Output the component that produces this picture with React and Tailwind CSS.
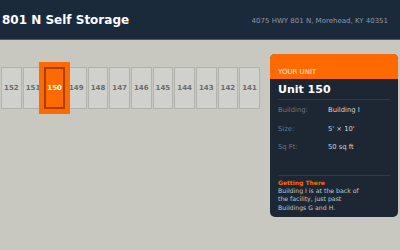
import React from 'react';

const units = ['152', '151', '150', '149', '148', '147', '146', '145', '144', '143', '142', '141'];

const details = [
  { label: 'Building:', value: 'Building I' },
  { label: 'Size:', value: "5' × 10'" },
  { label: 'Sq Ft:', value: '50 sq ft' },
];

const App = () => {
  const selected = '150';

  return (
    <div className="w-[400px] h-[250px] bg-[#c9c8c0] overflow-hidden font-['DejaVu_Sans',sans-serif]">
      {/* Header */}
      <div className="h-[40px] bg-[#1b2a3b] border-b border-[#4a5868] flex items-center justify-between pl-[2px] pr-[12px]">
        <h1 className="text-[12px] font-bold text-white leading-none pt-[1px]">801 N Self Storage</h1>
        <p className="text-[7px] text-[#8d99a6] leading-none pt-[4px]">4075 HWY 801 N, Morehead, KY 40351</p>
      </div>

      <div className="flex">
        {/* Unit row */}
        <div className="flex gap-[1px] pl-[1px] mt-[27px] h-[42px]">
          {units.map((u) => (
            <div
              key={u}
              className={
                u === selected
                  ? 'relative z-10 w-[20.67px] h-[42px] border-2 border-[#a84000] bg-[#ff6a00] shadow-[0_0_0_5px_#ff6a00] flex items-center justify-center text-[7px] font-bold text-white'
                  : 'w-[20.67px] h-[42px] border border-[#b3b3ae] bg-[#d0d0cd] flex items-center justify-center text-[7px] font-bold text-[#6b6b6b]'
              }
            >
              {u}
            </div>
          ))}
        </div>

        {/* Unit panel */}
        <div className="ml-auto mr-[2px] mt-[14px] w-[128px] rounded-[5px] overflow-hidden bg-[#1c2733]">
          <div className="h-[25px] bg-[#ff6a00] px-[8px] pt-[3px]">
            <span className="text-[7px] text-white/85 leading-none">YOUR UNIT</span>
          </div>
          <div className="px-[8px] pb-[5px]">
            <div className="pt-[4px] pb-[3px] border-b border-[#2e3b48]">
              <h2 className="text-[11px] font-bold text-white leading-[13px]">Unit 150</h2>
            </div>
            <div className="mt-[1px]">
              {details.map((d) => (
                <div key={d.label} className="h-[18.5px] flex items-center text-[6.8px]">
                  <span className="w-[50px] text-[#6b7785]">{d.label}</span>
                  <span className="text-[#d3d8dd]">{d.value}</span>
                </div>
              ))}
            </div>
            <div className="mt-[18px] border-t border-[#2e3b48] pt-[3px]">
              <p className="text-[6px] font-bold text-[#ff6a00] leading-[8.5px]">Getting There</p>
              <p className="text-[6.2px] text-[#c3c9cf] leading-[8.3px] max-w-[88px]">
                Building I is at the back of the facility, just past Buildings G and H.
              </p>
            </div>
          </div>
        </div>
      </div>
    </div>
  );
};

export default App;
